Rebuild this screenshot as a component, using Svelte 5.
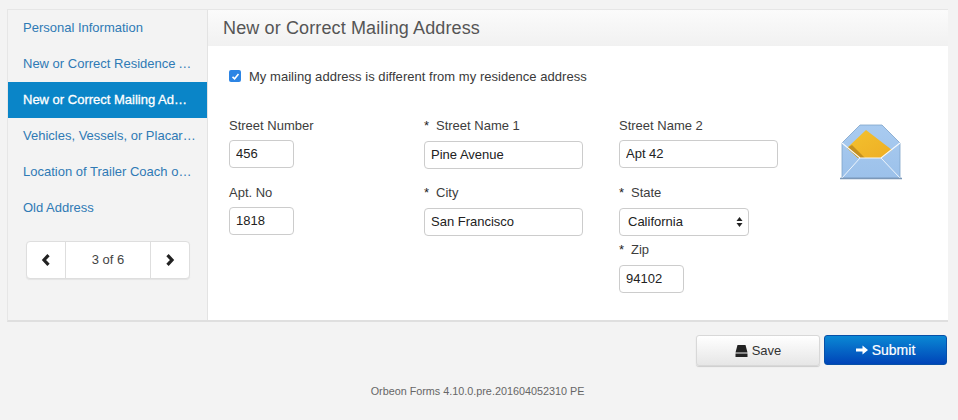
<script>
  const sections = [
    { name: 'Personal Information' },
    { name: 'New or Correct Residence Address' },
    { name: 'New or Correct Mailing Address', active: true },
    { name: 'Vehicles, Vessels, or Placards' },
    { name: 'Location of Trailer Coach on Floating Home' },
    { name: 'Old Address' }
  ];
</script>

<div class="page">
  <div class="card">
    <nav class="side">
      <ul>
        {#each sections as s}
          <li class:active={s.active}>{s.name}</li>
        {/each}
      </ul>
      <div class="pager">
        <span class="arrow">
          <svg width="10" height="12" viewBox="0 0 10 12"><path d="M7.500 1.200 L3 6 L7.500 10.800" fill="none" stroke="#222" stroke-width="3.200"/></svg>
        </span>
        <span class="count">3 of 6</span>
        <span class="arrow">
          <svg width="10" height="12" viewBox="0 0 10 12"><path d="M2.500 1.200 L7 6 L2.500 10.800" fill="none" stroke="#222" stroke-width="3.200"/></svg>
        </span>
      </div>
    </nav>
    <main class="content">
      <h1>New or Correct Mailing Address</h1>
      <div class="body">
        <label class="check">
          <span class="box">
            <svg width="9" height="9" viewBox="0 0 9 9"><path d="M1.500 4.800 L3.600 6.800 L7.500 2" fill="none" stroke="#fff" stroke-width="1.600"/></svg>
          </span>
          My mailing address is different from my residence address
        </label>
        <div class="form">
          <div class="col">
            <div class="field">
              <div class="lbl">Street Number</div>
              <input class="short" value="456" readonly />
            </div>
            <div class="field">
              <div class="lbl">Apt. No</div>
              <input class="short" value="1818" readonly />
            </div>
          </div>
          <div class="col">
            <div class="field">
              <div class="lbl"><span class="req">*</span>Street Name 1</div>
              <input class="long nudge" value="Pine Avenue" readonly />
            </div>
            <div class="field">
              <div class="lbl"><span class="req">*</span>City</div>
              <input class="long nudge" value="San Francisco" readonly />
            </div>
          </div>
          <div class="col">
            <div class="field">
              <div class="lbl">Street Name 2</div>
              <input class="long" value="Apt 42" readonly />
            </div>
            <div class="field">
              <div class="lbl"><span class="req">*</span>State</div>
              <div class="select nudge">
                California
                <svg width="7" height="12" viewBox="0 0 7 12"><path d="M3.500 1 L6.500 5 L0.500 5Z M3.500 11 L6.500 7 L0.500 7Z" fill="#222"/></svg>
              </div>
            </div>
            <div class="field zip">
              <div class="lbl"><span class="req">*</span>Zip</div>
              <input class="short nudge" value="94102" readonly />
            </div>
          </div>
          <svg class="mail" width="62" height="56" viewBox="0 0 62 56">
            <defs>
              <linearGradient id="env" x1="0" y1="0" x2="0" y2="1">
                <stop offset="0" stop-color="#a9cbf0"/>
                <stop offset="1" stop-color="#9cc1ea"/>
              </linearGradient>
              <linearGradient id="sheet" x1="0" y1="0" x2="1" y2="1">
                <stop offset="0" stop-color="#f3c22e"/>
                <stop offset="1" stop-color="#eeae25"/>
              </linearGradient>
            </defs>
            <path d="M2 19 L20 1 H42 L60 19 V54 H2Z" fill="url(#env)" stroke="#7fa3c9" stroke-width="0.800"/>
            <path d="M26 6 L7 24 L18 34 H41 L52 26Z" fill="url(#sheet)"/>
            <path d="M7 24 L18 34 H25 L12 21Z" fill="#c4901f"/>
            <path d="M2 19 L20 34 H41 L60 19" fill="none" stroke="#f4f8fc" stroke-width="1.200"/>
            <path d="M20 34 L2 54 M41 34 L60 54" fill="none" stroke="#eef5fc" stroke-width="1"/>
            <path d="M0 54.500 H62" stroke="#7c98b8" stroke-width="1.500"/>
          </svg>
        </div>
      </div>
    </main>
  </div>

  <div class="actions">
    <button class="save">
      <svg width="13" height="12" viewBox="0 0 13 12"><path d="M2.500 0 H10.500 L12.500 7.500 H0.500Z M0.500 8.500 H12.500 V12 H0.500Z" fill="#222"/></svg>
      Save
    </button>
    <button class="submit">
      <svg width="12" height="10" viewBox="0 0 12 10"><path d="M0 3.500 H6.500 V0.500 L12 5 L6.500 9.500 V6.500 H0Z" fill="#fff"/></svg>
      Submit
    </button>
  </div>
  <footer>Orbeon Forms 4.10.0.pre.201604052310 PE</footer>
</div>

<style>
  :global(body) {
    background: #f3f3f3;
  }
  .page {
    width: 958px;
    height: 420px;
    box-sizing: border-box;
    padding: 9px 10px 0 7px;
    font-family: "Liberation Sans", Arial, sans-serif;
    font-size: 13px;
    color: #333;
    overflow: hidden;
  }
  .card {
    display: flex;
    height: 313px;
    box-sizing: border-box;
    border: 1px solid #e6e6e6;
    border-bottom: 2px solid #dfdfdf;
    border-right: 0;
    background: #f3f3f3;
  }
  .side {
    width: 199px;
    flex: none;
    border-right: 1px solid #e3e3e3;
  }
  ul {
    list-style: none;
    margin: 0;
    padding: 0;
  }
  li {
    height: 36px;
    line-height: 36px;
    padding: 0 11px 0 15px;
    color: #2f7ab5;
    white-space: nowrap;
    overflow: hidden;
    text-overflow: ellipsis;
  }
  li.active {
    padding-right: 13px;
    background: #0a85c8;
    color: #fff;
    -webkit-text-stroke: 0.3px #fff;
  }
  .pager {
    display: flex;
    height: 38px;
    box-sizing: border-box;
    margin: 15px 17px 0 18px;
    background: #fff;
    border: 1px solid #dedede;
    border-radius: 4px;
    box-shadow: 0 1px 1px #e4e4e4;
  }
  .arrow {
    width: 38px;
    display: flex;
    align-items: center;
    justify-content: center;
  }
  .count {
    flex: 1;
    text-align: center;
    line-height: 36px;
    color: #444;
    border-left: 1px solid #dedede;
    border-right: 1px solid #dedede;
  }
  .content {
    flex: 1;
    background: #fff;
    min-width: 0;
  }
  h1 {
    margin: 0;
    height: 36px;
    padding-left: 15px;
    font-size: 18px;
    font-weight: normal;
    line-height: 36px;
    letter-spacing: 0.13px;
    color: #555;
    background: linear-gradient(#fbfbfb, #f1f1f1);
  }
  .body {
    padding: 0 0 0 21px;
  }
  .check {
    display: flex;
    align-items: center;
    gap: 7px;
    height: 20px;
    margin-top: 20px;
    letter-spacing: 0.035px;
    color: #3a3a3a;
  }
  .box {
    width: 12px;
    height: 12px;
    border-radius: 2px;
    background: #2d85e4;
    display: flex;
    align-items: center;
    justify-content: center;
    margin-right: 1px;
  }
  .form {
    display: flex;
    position: relative;
    margin-top: 30px;
  }
  .col {
    width: 195px;
    flex: none;
  }
  .field {
    height: 67px;
  }
  .field.zip {
    height: auto;
    margin-top: -10px;
  }
  .lbl {
    height: 24px;
    line-height: 19px;
    color: #3d3d3d;
  }
  .req {
    display: inline-block;
    width: 12px;
    color: #222;
  }
  input, .select {
    display: block;
    box-sizing: border-box;
    height: 28px;
    margin: 0;
    padding: 0 6px 2px;
    font: 13px "Liberation Sans", Arial, sans-serif;
    color: #222;
    background: #fff;
    border: 1px solid #ccc;
    border-radius: 4px;
    outline: none;
  }
  .short {
    width: 65px;
  }
  .long {
    width: 159px;
  }
  .select {
    width: 130px;
    padding: 0 5px 2px 8px;
    display: flex;
    align-items: center;
    justify-content: space-between;
  }
  .select svg {
    margin-top: 2px;
  }
  input.nudge, .select.nudge {
    margin-top: 1px;
  }
  .mail {
    position: absolute;
    left: 611px;
    top: 8px;
  }
  .actions {
    display: flex;
    justify-content: flex-end;
    align-items: flex-start;
    gap: 4px;
    margin-top: 13px;
    padding-right: 1px;
  }
  button {
    width: 123px;
    height: 31px;
    display: flex;
    align-items: center;
    justify-content: center;
    gap: 4px;
    padding: 0;
    font: 13px "Liberation Sans", Arial, sans-serif;
    border-radius: 3px;
  }
  .save {
    width: 124px;
    color: #333;
    background: linear-gradient(#fff, #e6e6e6);
    border: 1px solid #d8d8d8;
    box-shadow: 0 1px 1px #ccc;
  }
  .submit {
    height: 30px;
    color: #fff;
    font-size: 14px;
    -webkit-text-stroke: 0.2px #fff;
    background: linear-gradient(#0a88d4, #0044b8);
    border: 1px solid #0650a8;
  }
  footer {
    margin-top: 19px;
    text-align: center;
    font-size: 10.8px;
    line-height: 13px;
    color: #666;
  }
</style>
